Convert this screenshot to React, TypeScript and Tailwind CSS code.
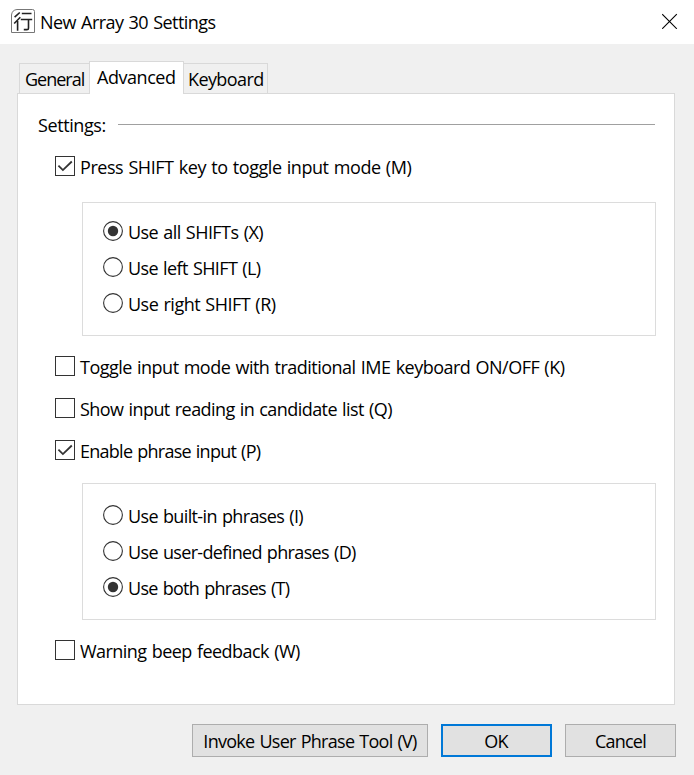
import type { ReactNode } from "react";

function Label({ children, className = "" }: { children: ReactNode; className?: string }) {
  return <span className={`block leading-5 whitespace-nowrap [word-spacing:1px] ${className}`}>{children}</span>;
}

function CheckRow({ label, checked = false, className = "", text = "" }: { label: string; checked?: boolean; className?: string; text?: string }) {
  return (
    <div role="checkbox" aria-checked={checked} className={`ml-[37px] flex h-5 items-start gap-[5px] ${className}`}>
      <span className="block size-5 shrink-0 border border-[#333333] bg-white">
        {checked && (
          <svg viewBox="0 0 18 18" className="block size-[18px]" fill="none" stroke="#333333" strokeWidth="1.8">
            <path d="M2.4 8.7 6.9 13.1 15.8 4.5" />
          </svg>
        )}
      </span>
      <Label className={`pt-px ${text}`}>{label}</Label>
    </div>
  );
}

function RadioRow({ label, checked = false, text = "" }: { label: string; checked?: boolean; text?: string }) {
  return (
    <div role="radio" aria-checked={checked} className="flex h-5 items-start gap-[5px]">
      <svg viewBox="0 0 20 20" className="block size-5 shrink-0">
        <circle cx="10" cy="10" r="9.4" fill="#ffffff" stroke="#333333" strokeWidth="1.1" />
        {checked && <circle cx="10" cy="10" r="5.2" fill="#333333" />}
      </svg>
      <Label className={`pt-px ${text}`}>{label}</Label>
    </div>
  );
}

export default function App() {
  return (
    <div className="flex h-[775px] w-[694px] flex-col overflow-hidden bg-[#f0f0f0] font-['Open_Sans','Noto_Sans',sans-serif] text-[18px] text-black">
      <header className="flex h-11 shrink-0 items-start justify-between bg-white pr-[16px] pl-[11px]">
        <div className="flex items-start">
          <svg viewBox="0 0 24 24" className="mt-[9px] block size-6" fill="none" stroke="#222222">
            <path d="M6 .5H21.5a2 2 0 0 1 2 2V23.5H.5V6Q1 1 6 .5Z" stroke="#777777" strokeWidth="1" fill="#ffffff" />
            <path d="M8.8 3.5 3.6 8.2M9.3 8.3 3.2 14.5M6.6 12V21.7M10.8 4.5H20.5M9.8 10.5H21.2M17.5 10.5V19.2Q17.5 20.6 15.9 20.6H12.8" strokeWidth="1.6" />
          </svg>
          <Label className="mt-3 ml-[5px] tracking-[-0.55px]">New Array 30 Settings</Label>
        </div>
        <svg viewBox="0 0 16 16" className="mt-[13px] block size-4" fill="none" stroke="#000000" strokeWidth="1.1">
          <path d="M.2 1.2 14.8 15.8M14.8 1.2.2 15.8" />
        </svg>
      </header>

      <nav className="relative z-10 mt-[17px] ml-[19px] flex h-8 shrink-0 items-end">
        <div className="h-[30px] w-[70px] border-t border-l border-[#d9d9d9] pt-[5px] pl-[5px]">
          <Label className="tracking-[-1px]">General</Label>
        </div>
        <div className="-mb-px h-[33px] w-[95px] border border-b-0 border-[#d9d9d9] bg-white pt-[5px] pl-[7px]">
          <Label className="tracking-[-0.45px]">Advanced</Label>
        </div>
        <div className="h-[30px] w-[84px] border-t border-r border-[#d9d9d9] pt-[5px] pl-[4px]">
          <Label className="tracking-[-0.6px]">Keyboard</Label>
        </div>
      </nav>

      <main className="ml-[17px] h-[612px] w-[658px] shrink-0 border border-[#d9d9d9] bg-white">
        <div className="mt-[21px] ml-[20px] flex h-5">
          <Label className="w-20 tracking-[-0.4px]">Settings:</Label>
          <div className="mt-[9px] h-px w-[537px] bg-[#a0a0a0]" />
        </div>
        <CheckRow className="mt-[21px]" checked label="Press SHIFT key to toggle input mode (M)" text="tracking-[-0.45px]" />
        <section className="mt-[26px] ml-16 flex h-[134px] w-[574px] flex-col gap-4 border border-[#dcdcdc] pt-[18px] pl-5">
          <RadioRow checked label="Use all SHIFTs (X)" text="tracking-[-0.55px]" />
          <RadioRow label="Use left SHIFT (L)" text="tracking-[-0.6px]" />
          <RadioRow label="Use right SHIFT (R)" text="tracking-[-0.5px]" />
        </section>
        <CheckRow className="mt-5" label="Toggle input mode with traditional IME keyboard ON/OFF (K)" text="tracking-[-0.51px]" />
        <CheckRow className="mt-[22px]" label="Show input reading in candidate list (Q)" text="tracking-[-0.57px]" />
        <CheckRow className="mt-[22px]" checked label="Enable phrase input (P)" text="tracking-[-0.74px]" />
        <section className="mt-[23px] ml-16 flex h-[137px] w-[574px] flex-col gap-4 border border-[#dcdcdc] pt-[21px] pl-5">
          <RadioRow label="Use built-in phrases (I)" text="tracking-[-0.63px]" />
          <RadioRow label="Use user-defined phrases (D)" text="tracking-[-0.65px]" />
          <RadioRow checked label="Use both phrases (T)" text="tracking-[-0.7px]" />
        </section>
        <CheckRow className="mt-5" label="Warning beep feedback (W)" text="tracking-[-0.54px]" />
      </main>

      <footer className="mt-[19px] ml-[192px] flex h-[33px] gap-[13px]">
        <button className="flex w-[236px] justify-center border border-[#adadad] bg-[#e1e1e1] pt-[6px]">
          <Label className="tracking-[-0.72px]">Invoke User Phrase Tool (V)</Label>
        </button>
        <button className="flex w-[111px] justify-center border-2 border-[#0078d7] bg-[#e1e1e1] pt-[5px] pr-px">
          <Label className="tracking-[-0.7px]">OK</Label>
        </button>
        <button className="flex w-[111px] justify-center border border-[#adadad] bg-[#e1e1e1] pt-[6px]">
          <Label className="tracking-[-0.8px]">Cancel</Label>
        </button>
      </footer>
    </div>
  );
}
